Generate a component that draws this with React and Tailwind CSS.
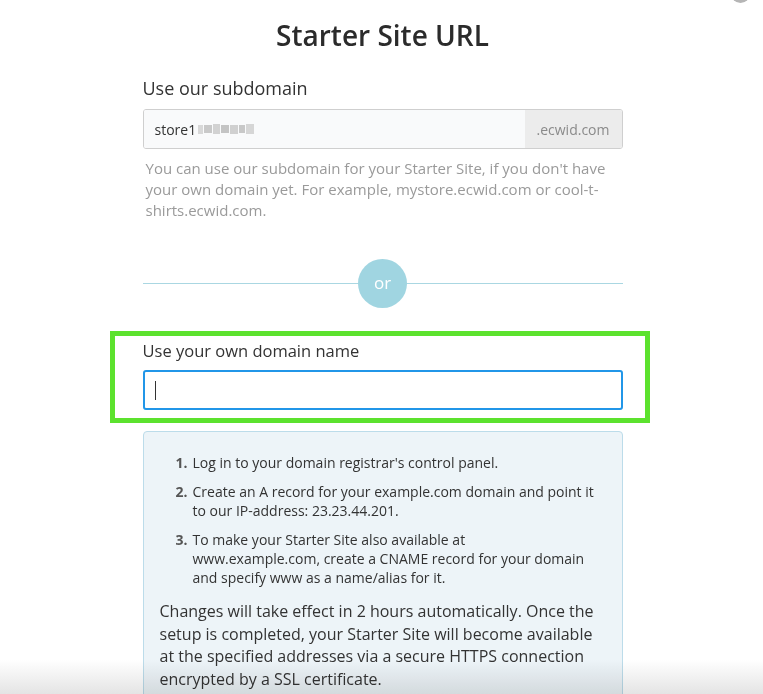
import React from "react";

export default function App() {
  const steps = [
    ["1.", <>Log in to your domain registrar's control panel.</>],
    ["2.", <>Create an A record for your example.com domain and point it to our IP-address: 23.23.44.201.</>],
    ["3.", <>To make your Starter Site also available at<br />www.example.com, create a CNAME record for your domain and specify www as a name/alias for it.</>],
  ];
  return (
    <div
      className="relative w-[763px] h-[694px] overflow-hidden bg-white text-[#333]"
      style={{ fontFamily: '"Open Sans", "Liberation Sans", sans-serif' }}
    >
      <div className="absolute right-[13px] top-[-16px] w-[19px] h-[19px] rounded-full bg-[#b5b5b5]" />
      <div className="w-[480px] mx-auto pl-[2px] box-content">
        <h1 className="pt-[17px] text-center text-[28px] leading-[36px] font-semibold text-[#2b2b2b]">
          Starter Site URL
        </h1>
        <div className="mt-[23px] text-[18px] leading-[24px] text-[#333]">Use our subdomain</div>
        <div className="mt-[9px] flex h-[40px] rounded-[3px] border border-[#cfcfcf] overflow-hidden">
          <div className="flex-1 flex items-center pl-[11px] bg-[#f9fafb] text-[14px]">
            <span>store1</span>
            <span className="ml-[2px] flex items-center gap-[1px]">
              <span className="w-[5px] h-[9px] bg-[#d8d8d8]" />
              <span className="w-[8px] h-[8px] bg-[#c9c9c9]" />
              <span className="w-[7px] h-[10px] bg-[#d2d2d2]" />
              <span className="w-[8px] h-[8px] bg-[#c4c4c4]" />
              <span className="w-[8px] h-[9px] bg-[#d0d0d0]" />
              <span className="w-[6px] h-[8px] bg-[#c8c8c8]" />
              <span className="w-[8px] h-[10px] bg-[#d6d6d6]" />
            </span>
          </div>
          <div className="w-[97px] flex items-center justify-center bg-[#ececec] text-[14px] text-[#8a8a8a]">
            .ecwid.com
          </div>
        </div>
        <p className="mt-[9px] pl-[3px] pr-[8px] text-[15px] leading-[21px] text-[#9a9a9a]">
          You can use our subdomain for your Starter Site, if you don't have your own domain yet. For example, mystore.ecwid.com or cool-t-shirts.ecwid.com.
        </p>
        <div className="relative mt-[38px] h-[49px] flex items-center justify-center">
          <div className="absolute left-0 right-0 top-[24px] h-px bg-[#aad7e2]" />
          <div className="relative w-[49px] h-[49px] rounded-full bg-[#a0d5e1] flex items-center justify-center text-white text-[17px] pb-[1px]">
            or
          </div>
        </div>
        <div className="mt-[23px] ml-[-33px] mr-[-27px] border-[5px] border-[#5ce22e] pl-[28px] pr-[22px] pt-[3px] pb-[8px]">
          <div className="text-[16.5px] leading-[24px] text-[#333]">Use your own domain name</div>
          <div className="mt-[7px] h-[40px] rounded-[3px] border-2 border-[#2196e8] flex items-center pl-[10px]">
            <span className="w-px h-[19px] bg-[#333]" />
          </div>
        </div>
        <div className="mt-[8px] rounded-[4px] border border-[#bcdcea] bg-[#edf4f8] px-[16px] pt-[21px] pb-[20px]">
          <ol className="pl-[16px] text-[14px] leading-[19px] text-[#333]">
            {steps.map(([n, t]) => (
              <li key={n} className="flex mb-[10px]">
                <span className="w-[17px] shrink-0 font-bold text-[#555]">{n}</span>
                <span>{t}</span>
              </li>
            ))}
          </ol>
          <p className="mt-[13px] text-[16px] leading-[22.5px] text-[#333]">
            Changes will take effect in 2 hours automatically. Once the setup is completed, your Starter Site will become available at the specified addresses via a secure HTTPS connection encrypted by a SSL certificate.
          </p>
        </div>
      </div>
      <div className="pointer-events-none absolute left-0 right-0 bottom-0 h-[34px] mix-blend-multiply bg-gradient-to-b from-white to-[#e4e4e4]" />
    </div>
  );
}
